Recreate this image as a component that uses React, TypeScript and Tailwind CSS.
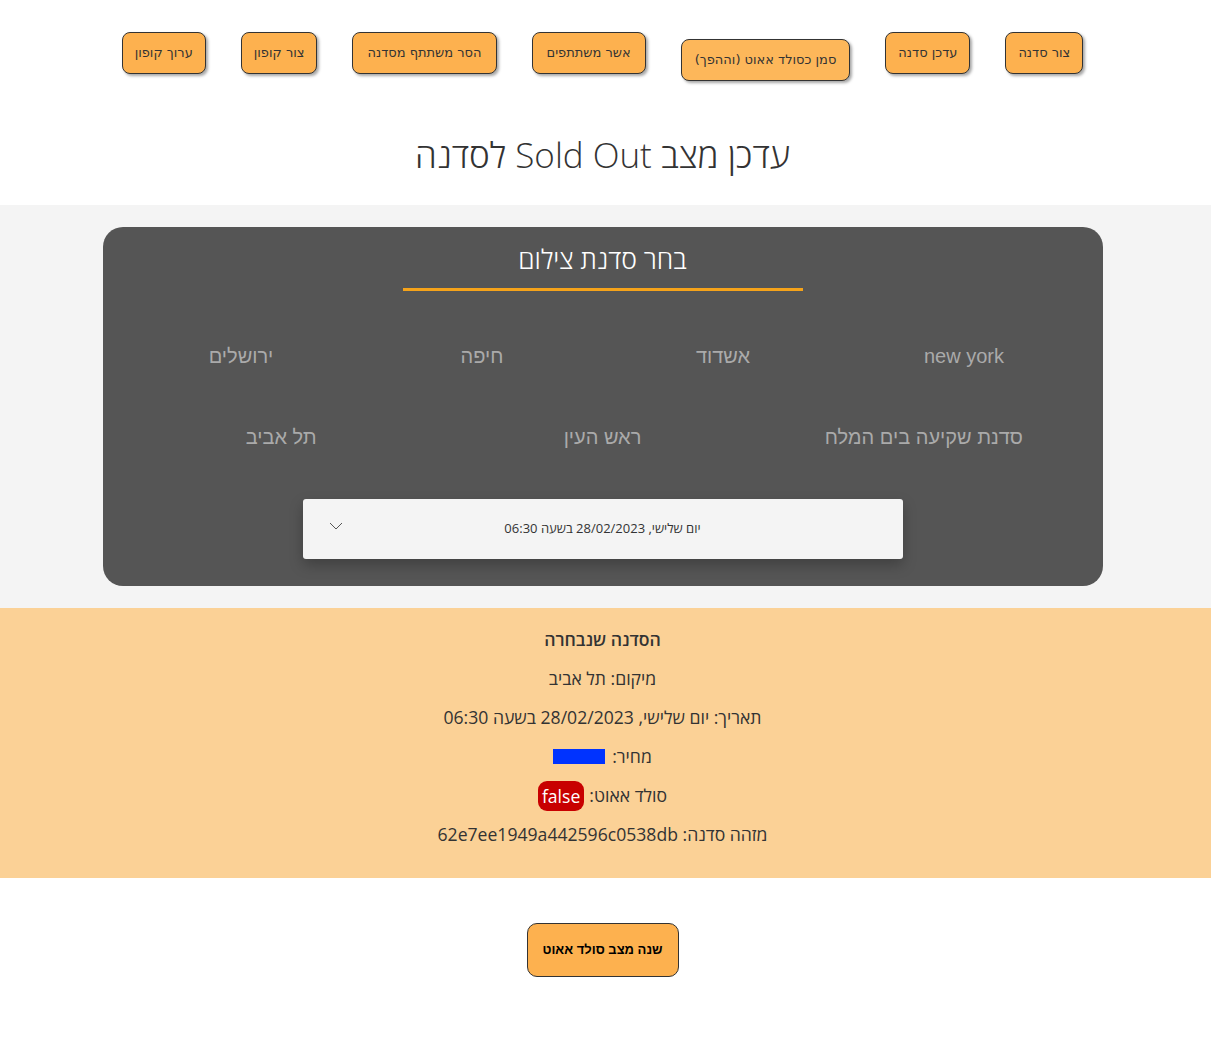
import React from "react";

const navBtn =
  "h-[42px] px-[12px] rounded-[8px] border border-[#333] bg-[#fdb14f] text-[13px] text-[#333] shadow-[2px_2px_3px_rgba(0,0,0,0.35)] whitespace-nowrap";

export default function App() {
  const navItems = [
    { t: "צור סדנה", cls: "" },
    { t: "עדכן סדנה", cls: "" },
    { t: "סמן כסולד אאוט (וההפך)", cls: "mt-[7px] bg-[#fdb75a] px-[13px]" },
    { t: "אשר משתתפים", cls: "px-[14px]" },
    { t: "הסר משתתף מסדנה", cls: "px-[14px]" },
    { t: "צור קופון", cls: "" },
    { t: "ערוך קופון", cls: "" },
  ];
  const row1 = ["new york", "אשדוד", "חיפה", "ירושלים"];
  const row2 = ["סדנת שקיעה בים המלח", "ראש העין", "תל אביב"];
  return (
    <div dir="rtl" className="w-full min-h-[1039px] bg-white" style={{ fontFamily: '"Open Sans", "Noto Sans", sans-serif' }}>
      {/* nav */}
      <div className="flex justify-center items-start gap-[35px] pt-[32px] h-[81px] pr-[6px]" style={{ fontFamily: '"DejaVu Sans", sans-serif' }}>
        {navItems.map((b) => (
          <button key={b.t} className={`${navBtn} ${b.cls}`}>
            {b.t}
          </button>
        ))}
      </div>
      {/* title */}
      <h1 className="text-center text-[35px] font-light text-[#333] leading-[52px] mt-[48px] mb-[24px] pr-[6px]">
        עדכן מצב Sold Out לסדנה
      </h1>
      {/* gray band */}
      <div className="bg-[#f4f4f4] py-[22px] pr-[6px]">
        <div className="w-[1000px] mx-auto rounded-[20px] bg-[#555555] pt-[14px] pb-[27px] flex flex-col items-center">
          <div className="text-[26.5px] font-light text-white leading-[36px]">בחר סדנת צילום</div>
          <div className="mt-[11px] w-[400px] h-[3px] bg-[#f5a31a]" />
          <div className="mt-[45px] w-[964px] flex h-[40px] items-center" style={{ fontFamily: '"Liberation Sans", Arial, sans-serif' }}>
            {row1.map((c) => (
              <div key={c} className="flex-1 text-center text-[20px] text-[#aaaaaa]">
                {c}
              </div>
            ))}
          </div>
          <div className="mt-[41px] w-[964px] flex h-[40px] items-center" style={{ fontFamily: '"Liberation Sans", Arial, sans-serif' }}>
            {row2.map((c) => (
              <div key={c} className="flex-1 text-center text-[20px] text-[#aaaaaa]">
                {c}
              </div>
            ))}
          </div>
          <div className="mt-[42px] w-[600px] h-[60px] bg-[#f4f4f4] rounded-[3px] shadow-[0_6px_14px_rgba(0,0,0,0.25)] relative flex items-center justify-center">
            <span className="text-[13px] text-[#333]">יום שלישי, 28/02/2023 בשעה 06:30</span>
            <svg className="absolute left-[26px] top-[22px]" width="14" height="10" viewBox="0 0 14 10" fill="none">
              <path d="M1 2 L7 8 L13 2" stroke="#555" strokeWidth="1" />
            </svg>
          </div>
        </div>
      </div>
      {/* selected info */}
      <div className="bg-[#fbd196] pt-[12px] pb-[24px] pr-[6px] text-center text-[17.6px] text-[#333] leading-[39px]">
        <div className="font-semibold">הסדנה שנבחרה</div>
        <div>מיקום: תל אביב</div>
        <div>תאריך: יום שלישי, 28/02/2023 בשעה 06:30</div>
        <div className="flex justify-center items-center gap-[7px]">
          <span>מחיר:</span>
          <span className="inline-block w-[52px] h-[15px] bg-[#0033ff]" />
        </div>
        <div className="flex justify-center items-center gap-[5px]">
          <span>סולד אאוט:</span>
          <span className="inline-block bg-[#c80000] text-white rounded-[9px] px-[4px] h-[30px] leading-[30px]">false</span>
        </div>
        <div>מזהה סדנה: 62e7ee1949a442596c0538db</div>
      </div>
      {/* bottom button */}
      <div className="flex justify-center mt-[45px] pr-[6px]">
        <button
          className="w-[152px] h-[54px] rounded-[10px] border border-[#333] bg-[#fdb14f] text-[13px] font-semibold text-black"
          style={{ fontFamily: '"Liberation Sans", Arial, sans-serif' }}
        >
          שנה מצב סולד אאוט
        </button>
      </div>
    </div>
  );
}
